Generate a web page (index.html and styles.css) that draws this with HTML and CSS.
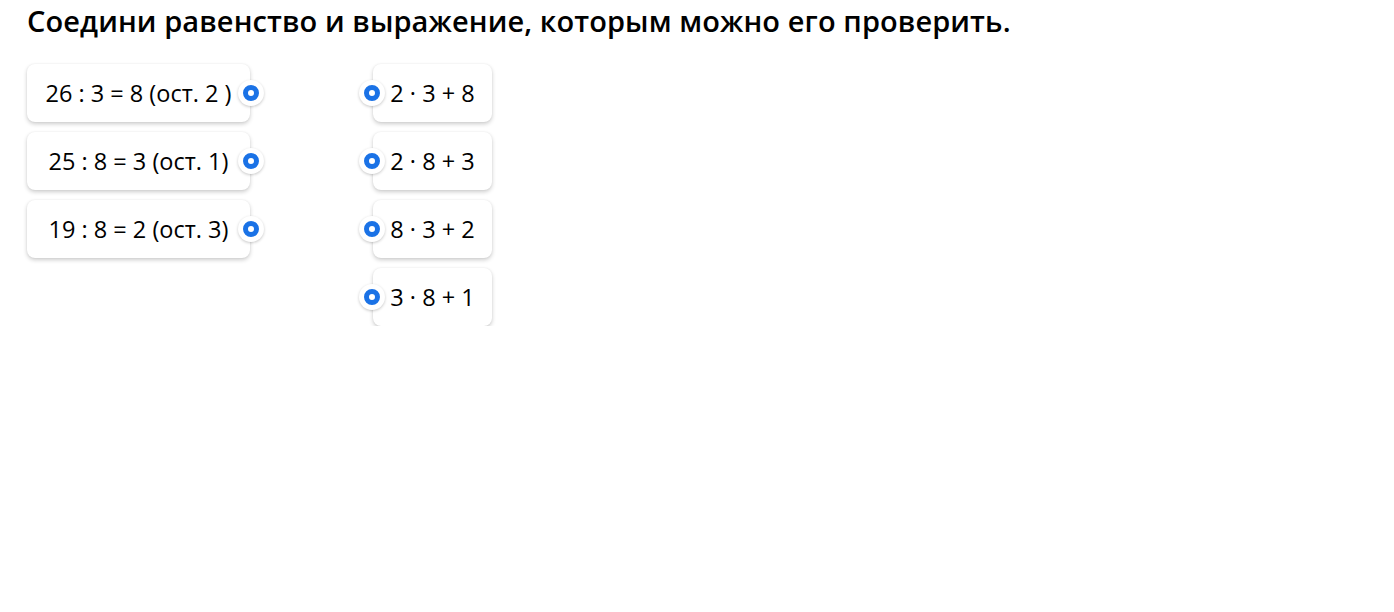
FILE: index.html
```html
<!DOCTYPE html>
<html lang="ru">
<head>
  <meta charset="UTF-8" />
  <meta name="viewport" content="width=device-width, initial-scale=1.0"/>
  <title>Соедини равенство и выражение</title>
  <link rel="stylesheet" href="styles.css">
</head>
<body>
  <h1 class="task-title">Соедини равенство и выражение, которым можно его проверить.</h1>

  <div class="match">
    <div class="column column-left">
      <div class="card">26 : 3 = 8 (ост. 2 )<span class="dot"></span></div>
      <div class="card">25 : 8 = 3 (ост. 1)<span class="dot"></span></div>
      <div class="card">19 : 8 = 2 (ост. 3)<span class="dot"></span></div>
    </div>
    <div class="column column-right">
      <div class="card"><span class="dot"></span>2 · 3 + 8</div>
      <div class="card"><span class="dot"></span>2 · 8 + 3</div>
      <div class="card"><span class="dot"></span>8 · 3 + 2</div>
      <div class="card"><span class="dot"></span>3 · 8 + 1</div>
    </div>
  </div>
</body>
</html>
```

FILE: styles.css
```css
body {
  font-family: "Open Sans", Arial, sans-serif;
  margin: 0;
  padding: 0 27px;
  background-color: #fff;
  color: #000;
}
.task-title {
  margin: 0;
  padding-top: 2px;
  font-size: 29px;
  font-weight: 600;
  line-height: 38px;
  letter-spacing: 0.1px;
}
.match {
  display: flex;
  gap: 123px;
  margin-top: 24px;
}
.column {
  display: flex;
  flex-direction: column;
  gap: 10px;
}
.column-left .card {
  width: 223px;
}
.column-right .card {
  width: 119px;
}
.card {
  position: relative;
  height: 58px;
  display: flex;
  align-items: center;
  justify-content: center;
  background-color: #fff;
  border-radius: 8px;
  box-shadow: 0 2px 4px rgba(0, 0, 0, 0.2), 0 0 2px rgba(0, 0, 0, 0.06);
  font-size: 23.5px;
}
/* connection point on the card edge */
.dot {
  position: absolute;
  top: 50%;
  width: 26px;
  height: 26px;
  margin-top: -13px;
  border-radius: 50%;
  background-color: #fff;
  box-shadow: 0 1px 3px rgba(0, 0, 0, 0.22);
}
.dot::after {
  content: "";
  position: absolute;
  left: 5px;
  top: 5px;
  width: 16px;
  height: 16px;
  box-sizing: border-box;
  border: 5px solid #1a72e6;
  border-radius: 50%;
}
.column-left .dot {
  right: -14px;
}
.column-right .dot {
  left: -14px;
}
```
